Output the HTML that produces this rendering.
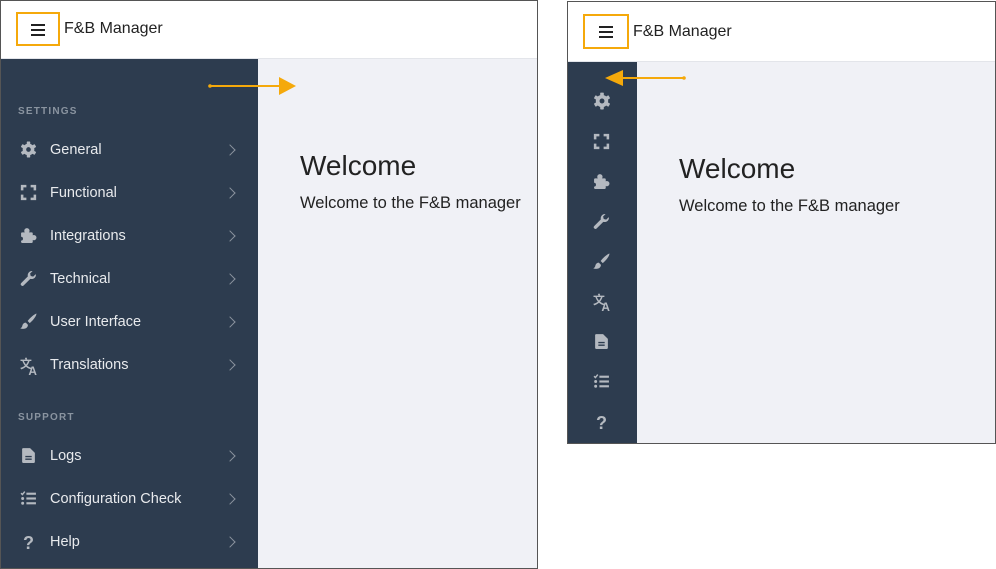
<!DOCTYPE html>
<html><head><meta charset="utf-8"><style>
*{margin:0;padding:0;box-sizing:border-box}
body{width:996px;height:569px;background:#fff;position:relative;overflow:hidden;font-family:"Liberation Sans","DejaVu Sans",sans-serif}
.abs{position:absolute}
.frame{position:absolute;border:1px solid #555;background:#fff;overflow:hidden}
.hdr{position:absolute;left:0;right:0;top:0;background:#fff;border-bottom:1px solid #e3e5ea}
.side{position:absolute;background:#2d3c4f}
.content{position:absolute;background:#f0f1f6}
.burger{position:absolute;border:2px solid #f5a90b}
.burger i{position:absolute;left:50%;width:14px;margin-left:-7px;height:2px;background:#222}
.title{position:absolute;font-size:16px;color:#222}
.sec{position:absolute;left:17px;font-size:10px;font-weight:bold;letter-spacing:1.2px;color:#8a94a0}
.item{position:absolute;left:0;width:256px;height:20px}
.item svg{position:absolute;left:19px;top:2px}
.item span{position:absolute;left:49px;top:3px;font-size:14.5px;color:#e8eaed}
.item b{position:absolute;left:225px;top:7px;width:8px;height:8px;border-right:1.6px solid #8b939e;border-top:1.6px solid #8b939e;transform:rotate(45deg)}
.ri{position:absolute;left:593px}
h1{position:absolute;font-weight:normal;font-size:28px;color:#222}
p{position:absolute;font-size:16.5px;color:#222}
</style></head><body>
<svg width="0" height="0" style="position:absolute">
<defs>
<symbol id="gear" viewBox="0 0 16 16"><g fill="#b4b9c0"><circle cx="8" cy="8" r="5.5"/><g><rect x="6.4" y="0.5" width="3.2" height="15" rx="0.6"/><rect x="6.4" y="0.5" width="3.2" height="15" rx="0.6" transform="rotate(60 8 8)"/><rect x="6.4" y="0.5" width="3.2" height="15" rx="0.6" transform="rotate(120 8 8)"/></g></g><circle cx="8" cy="8" r="2.2" fill="#2d3c4f"/></symbol>
<symbol id="exp" viewBox="0 0 16 16"><g fill="none" stroke="#b4b9c0" stroke-width="2.4"><path d="M2 6V2h4M10 2h4v4M14 10v4h-4M6 14H2v-4"/></g></symbol>
<symbol id="puz" viewBox="0 0 16 16"><g fill="#b4b9c0"><rect x="1" y="5" width="11" height="10" rx="1"/><circle cx="6.5" cy="3.5" r="2.5"/><circle cx="13" cy="10" r="2.5"/></g><circle cx="1" cy="11" r="1.8" fill="#2d3c4f"/></symbol>
<symbol id="wr" viewBox="0 0 16 16"><path fill="#b4b9c0" d="M15 4.5a4 4 0 0 1-5.3 3.8L3.5 14.5a1.6 1.6 0 0 1-2.3-2.3L7.4 6A4 4 0 0 1 11.8 1l-2.3 2.3.6 2.3 2.3.6L14.7 4z"/></symbol>
<symbol id="br" viewBox="0 0 16 16"><path fill="#b4b9c0" d="M15.5 0.5c-2 0.5-6 4-8.3 7l2 2c3-2.5 6.3-6.5 6.3-9zM5.5 9c-2 0-3 1.5-3.3 3-.2 1.3-1 2-2 2.5 3 1 7 .5 7.3-3.3z"/></symbol>
<symbol id="tr" viewBox="0 0 16 16"><text x="0" y="10" font-size="10" font-weight="bold" fill="#b4b9c0" font-family="Noto Sans CJK SC,sans-serif">文</text><text x="7" y="16" font-size="10" font-weight="bold" fill="#b4b9c0" font-family="Liberation Sans,sans-serif">A</text></symbol>
<symbol id="fi" viewBox="0 0 16 16"><path fill="#b4b9c0" d="M3 1h6.5L14 5.5V14a1 1 0 0 1-1 1H3a1 1 0 0 1-1-1V2a1 1 0 0 1 1-1z"/><path stroke="#2d3c4f" stroke-width="1.3" d="M5 9h6M5 11.5h6"/></symbol>
<symbol id="li" viewBox="0 0 16 16"><g fill="#b4b9c0"><rect x="6" y="2.5" width="9" height="2"/><rect x="6" y="7" width="9" height="2"/><rect x="6" y="11.5" width="9" height="2"/><circle cx="2.5" cy="12.5" r="1.4"/><circle cx="2.5" cy="8" r="1.4"/></g><path d="M1 3l1.3 1.3L4.5 1.5" fill="none" stroke="#b4b9c0" stroke-width="1.4"/></symbol>
<symbol id="q" viewBox="0 0 16 16"><text x="8" y="15" text-anchor="middle" font-size="17" font-weight="bold" fill="#b4b9c0" font-family="Liberation Sans,sans-serif">?</text></symbol>
</defs></svg>

<div class="frame" style="left:0;top:0;width:538px;height:569px">
  <div class="hdr" style="height:58px"></div>
  <div class="burger" style="left:15px;top:11px;width:44px;height:34px"><i style="top:10px"></i><i style="top:15px"></i><i style="top:20px"></i></div>
  <div class="title" style="left:63px;top:19px">F&amp;B Manager</div>
  <div class="side" style="left:0;top:58px;width:257px;height:511px"></div>
  <div class="content" style="left:257px;top:58px;width:281px;height:511px"></div>
  <div class="sec" style="top:105px">SETTINGS</div>
  <div class="item" style="top:138px"><svg width="17" height="17"><use href="#gear"/></svg><span>General</span><b></b></div>
  <div class="item" style="top:181px"><svg width="17" height="17"><use href="#exp"/></svg><span>Functional</span><b></b></div>
  <div class="item" style="top:224px"><svg width="17" height="17"><use href="#puz"/></svg><span>Integrations</span><b></b></div>
  <div class="item" style="top:267px"><svg width="17" height="17"><use href="#wr"/></svg><span>Technical</span><b></b></div>
  <div class="item" style="top:310px"><svg width="17" height="17"><use href="#br"/></svg><span>User Interface</span><b></b></div>
  <div class="item" style="top:353px"><svg width="19" height="19"><use href="#tr"/></svg><span>Translations</span><b></b></div>
  <div class="sec" style="top:411px">SUPPORT</div>
  <div class="item" style="top:444px"><svg width="17" height="17"><use href="#fi"/></svg><span>Logs</span><b></b></div>
  <div class="item" style="top:487px"><svg width="17" height="17"><use href="#li"/></svg><span>Configuration Check</span><b></b></div>
  <div class="item" style="top:530px"><svg width="17" height="17"><use href="#q"/></svg><span>Help</span><b></b></div>
  <h1 style="left:299px;top:149px">Welcome</h1>
  <p style="left:299px;top:193px">Welcome to the F&amp;B manager</p>
  <svg class="abs" style="left:0;top:0" width="538" height="120"><circle cx="209" cy="85" r="1.8" fill="#f5a90b"/><line x1="209" y1="85" x2="282" y2="85" stroke="#f5a90b" stroke-width="2"/><polygon points="278,76 295,85 278,94" fill="#f5a90b"/></svg>
</div>

<div class="frame" style="left:567px;top:1px;width:429px;height:443px">
  <div class="hdr" style="height:60px"></div>
  <div class="burger" style="left:15px;top:12px;width:46px;height:35px"><i style="top:10px"></i><i style="top:15px"></i><i style="top:20px"></i></div>
  <div class="title" style="left:65px;top:21px">F&amp;B Manager</div>
  <div class="side" style="left:0;top:60px;width:69px;height:383px"></div>
  <div class="content" style="left:69px;top:60px;width:360px;height:383px"></div>
  <h1 style="left:111px;top:151px">Welcome</h1>
  <p style="left:111px;top:195px">Welcome to the F&amp;B manager</p>
  <svg class="abs" style="left:0;top:0" width="429" height="120"><line x1="50" y1="76" x2="116" y2="76" stroke="#f5a90b" stroke-width="2"/><circle cx="116" cy="76" r="1.8" fill="#f5a90b"/><polygon points="37,76 55,68 55,84" fill="#f5a90b"/></svg>
</div>
<svg class="ri" style="top:92px" width="18" height="18"><use href="#gear"/></svg>
<svg class="ri" style="top:133px" width="17" height="17"><use href="#exp"/></svg>
<svg class="ri" style="top:173px" width="17" height="17"><use href="#puz"/></svg>
<svg class="ri" style="top:213px" width="17" height="17"><use href="#wr"/></svg>
<svg class="ri" style="top:253px" width="17" height="17"><use href="#br"/></svg>
<svg class="ri" style="top:292px" width="19" height="19"><use href="#tr"/></svg>
<svg class="ri" style="top:333px" width="17" height="17"><use href="#fi"/></svg>
<svg class="ri" style="top:373px" width="17" height="17"><use href="#li"/></svg>
<svg class="ri" style="top:413px" width="17" height="17"><use href="#q"/></svg>
</body></html>
